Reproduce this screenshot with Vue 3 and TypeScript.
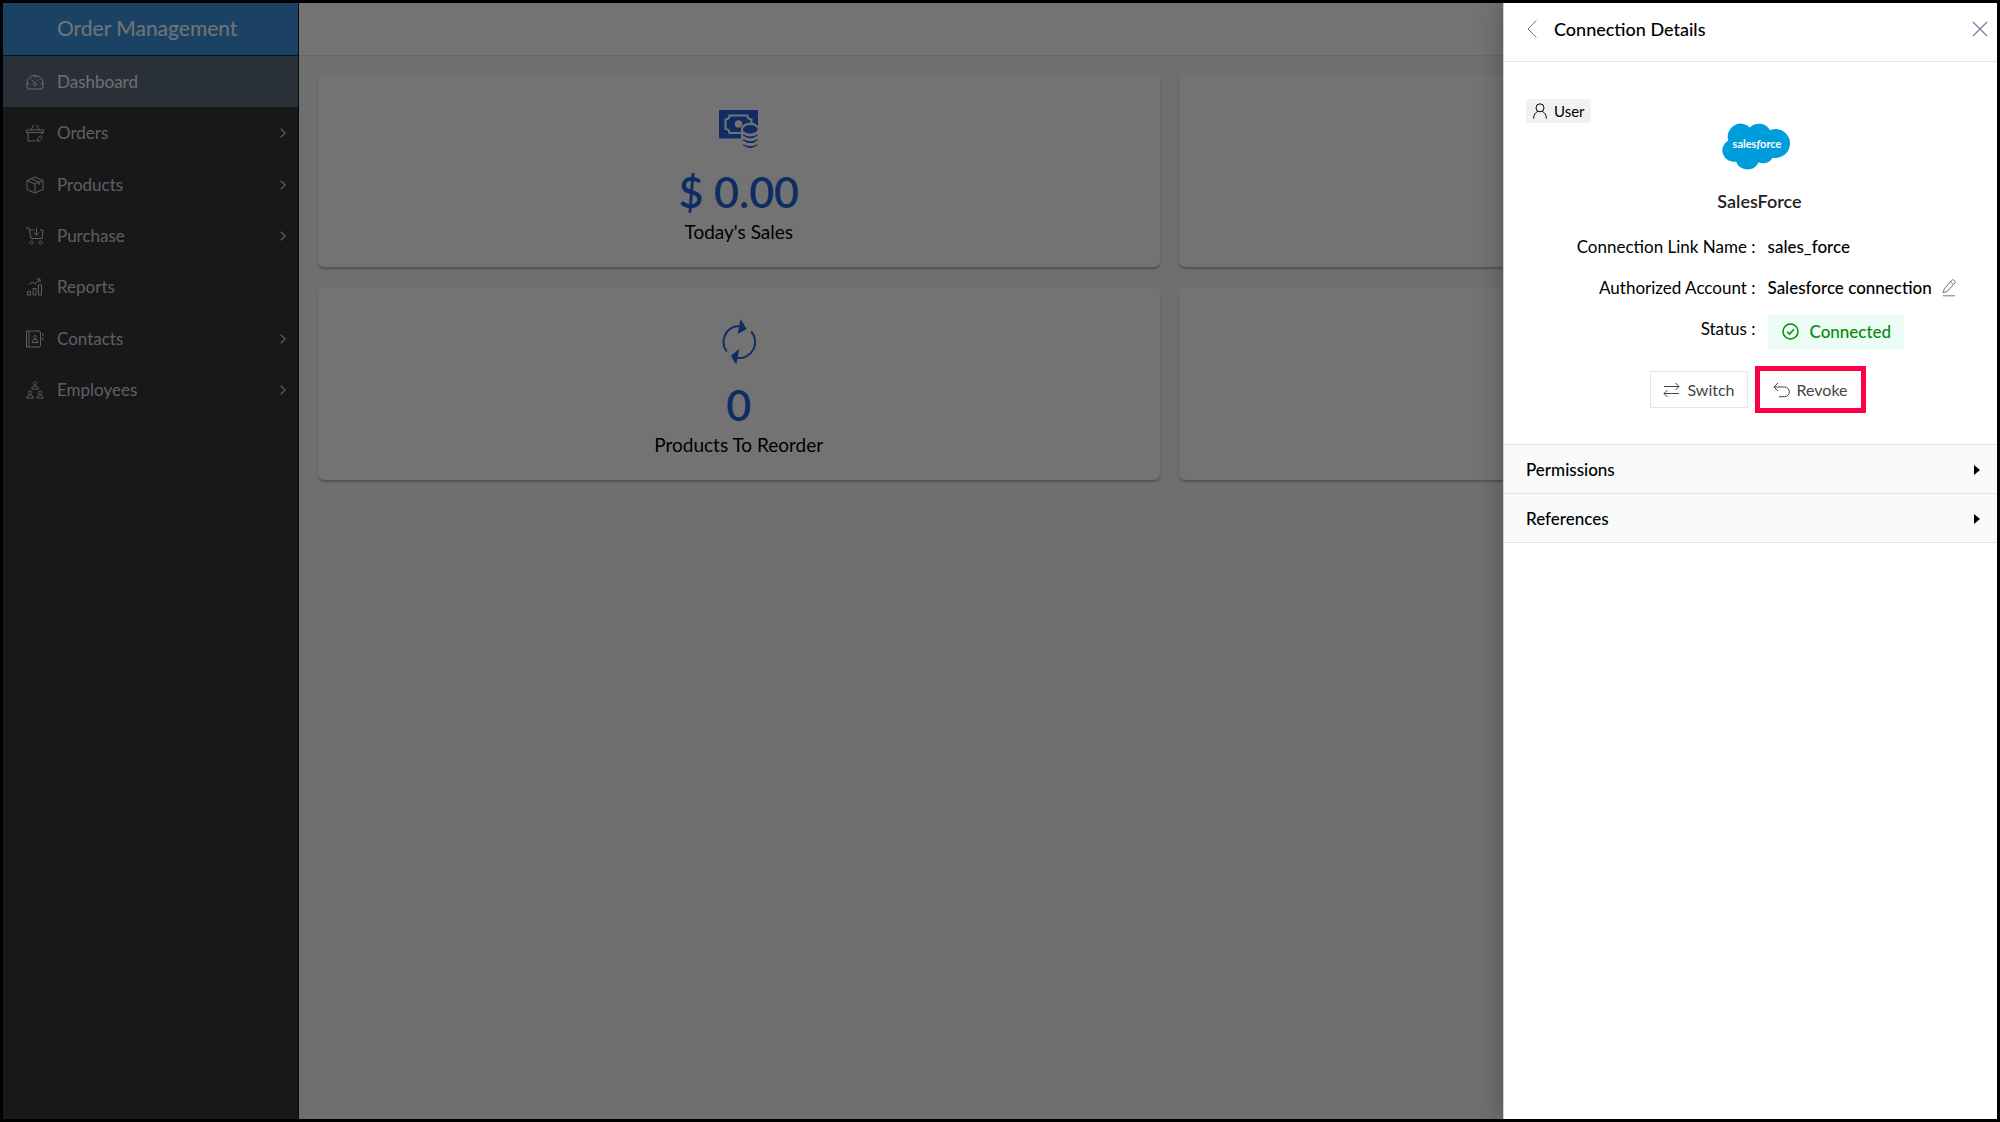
<script setup lang="ts">
interface NavItem {
  label: string
  icon: string[]
  expandable: boolean
  active?: boolean
}

const navItems: NavItem[] = [
  {
    label: 'Dashboard',
    expandable: false,
    active: true,
    icon: [
      'M3 16h12a2 2 0 0 0 2-2.200V10A8 7.500 0 0 0 1 10v3.800A2 2 0 0 0 3 16Z',
      'M5.500 6.500l2.700 3.300M9 2.500v2M12.800 6.600l-1.400 1.200M1 10.500h2M15 10.500h2',
      'M9 9.700a1.500 1.500 0 1 0 .1 0Z',
    ],
  },
  {
    label: 'Orders',
    expandable: true,
    icon: ['M.5 6h17v2.500H.5Z', 'M2 8.500V17h7M16 8.500v2', 'M7.500 1L5 6M10.500 1L13 6', 'M11.500 14.700l3-3 2 2-3 3-2.500.5Z'],
  },
  {
    label: 'Products',
    expandable: true,
    icon: ['M9 1l8 3.500v9L9 17l-8-3.500v-9Z', 'M1 4.500L9 8l8-3.500M9 8v9', 'M5 2.700l8 3.500v3'],
  },
  {
    label: 'Purchase',
    expandable: true,
    icon: [
      'M0 1h3l2 10.500h11L17 3h-3M4 3h4',
      'M10.500 1v7M7.700 5.500l2.800 2.800 2.800-2.800',
      'M5.500 14a1.600 1.600 0 1 0 .1 0ZM14.500 14a1.600 1.600 0 1 0 .1 0Z',
    ],
  },
  {
    label: 'Reports',
    expandable: false,
    icon: ['M1.500 13.500h3V17h-3ZM7 10.500h3V17H7ZM12.500 7h3v10h-3Z', 'M3 6.500L6.500 4 9 6l5-5M10.500 1H14v3.500'],
  },
  {
    label: 'Contacts',
    expandable: true,
    icon: [
      'M.5 1h12.500a1.500 1.500 0 0 1 1.500 1.500v13A1.500 1.500 0 0 1 13 17H.5ZM3 1v16',
      'M9 5.500a1.500 1.500 0 1 0 .1 0ZM6 12.500c0-2 1.200-3 3-3s3 1 3 3Z',
      'M16.800 3v3M16.800 7.500v3',
    ],
  },
  {
    label: 'Employees',
    expandable: true,
    icon: [
      'M9 .8a1.700 1.700 0 1 0 .1 0ZM5.800 8c0-2 1.200-3 3.200-3s3.200 1 3.200 3Z',
      'M4 9.800a1.700 1.700 0 1 0 .1 0ZM.8 17c0-2 1.200-3 3.200-3s3.200 1 3.200 3Z',
      'M14 9.800a1.700 1.700 0 1 0 .1 0ZM10.800 17c0-2 1.200-3 3.200-3s3.200 1 3.200 3Z',
    ],
  },
]

const sections: string[] = ['Permissions', 'References']
</script>

<template>
  <div class="app">
    <aside class="sidebar">
      <h1 class="brand">Order Management</h1>
      <nav>
        <ul class="nav">
          <li v-for="item in navItems" :key="item.label">
            <a href="#" class="nav-link" :class="{ active: item.active }">
              <svg class="nav-icon" viewBox="0 0 18 18" aria-hidden="true">
                <path v-for="d in item.icon" :key="d" :d="d" />
              </svg>
              <span class="nav-label">{{ item.label }}</span>
              <svg v-if="item.expandable" class="chevron" viewBox="0 0 6 10" aria-hidden="true">
                <path d="M.7.7L5.200 5 .7 9.300" />
              </svg>
            </a>
          </li>
        </ul>
      </nav>
    </aside>

    <main class="main">
      <header class="topbar"></header>
      <div class="cards">
        <section class="card">
          <div class="card-icon">
            <svg width="39" height="39" viewBox="0 0 39 39" aria-hidden="true">
              <path class="solid" d="M1 0h37q1 0 1 1v27.500H0V1Q0 0 1 0Z" />
              <path
                class="cut-line"
                d="M10.500 5.500h18q0 3.500 4 4v9.500q-4 .5-4 4h-18q0-3.500-4-4V9.500q4-.5 4-4Z"
              />
              <circle class="cut" cx="19.500" cy="14" r="3.700" />
              <path class="cut" d="M22 19a9 6 0 0 1 17-3v23H24v-10h-2Z" />
              <ellipse class="solid" cx="31.200" cy="19.300" rx="7.300" ry="4.300" />
              <path class="solid" d="M24 24.200q7.200 4.400 14.500 0v1.400q-7.200 5.400-14.500 0ZM24 29q7.200 4.400 14.500 0v1.400q-7.200 5.400-14.500 0ZM24 34q7.200 4.400 14.500 0v1q-7.200 6.500-14.500 0Z" />
            </svg>
          </div>
          <p class="value">$ 0.00</p>
          <h2 class="caption">Today's Sales</h2>
        </section>
        <section class="card"></section>
        <section class="card">
          <div class="card-icon">
            <svg width="34" height="46" viewBox="0 0 34 46" aria-hidden="true">
              <path class="ring" d="M4.700 32.500A16 16 0 0 1 17 7M29.200 12.500A16 16 0 0 1 15 38.900" />
              <path class="solid" d="M18.500 0l6.200 10-9 5ZM17.300 30l-8.500 6.700 5.500 8.800Z" />
            </svg>
          </div>
          <p class="value">0</p>
          <h2 class="caption">Products To Reorder</h2>
        </section>
        <section class="card"></section>
      </div>
    </main>

    <div class="overlay"></div>

    <aside class="panel" aria-label="Connection Details">
      <header class="panel-head">
        <button type="button" class="icon-btn" aria-label="Back">
          <svg width="10" height="18" viewBox="0 0 10 18"><path d="M9.300.5L1 9l8.300 8.500" /></svg>
        </button>
        <h2>Connection Details</h2>
        <button type="button" class="icon-btn close" aria-label="Close">
          <svg width="16" height="16" viewBox="0 0 16 16"><path d="M1 1l14 14M15 1L1 15" /></svg>
        </button>
      </header>

      <div class="details">
        <span class="badge">
          <svg width="14" height="16" viewBox="0 0 14 16" aria-hidden="true">
            <circle cx="7" cy="4.800" r="4" />
            <path d="M.6 15.500c0-4 2-6 4.200-7.200M13.400 15.500c0-4-2-6-4.200-7.200" />
          </svg>
          User
        </span>

        <svg class="logo" width="68" height="48" viewBox="0 0 68 48" role="img" aria-label="salesforce">
          <path
            d="M28 4.500A12.500 12.500 0 0 1 48 7.200 15 15 0 0 1 53.500 6a14.500 14.500 0 0 1 0 29 14 14 0 0 1-2.800-.3 10.800 10.800 0 0 1-14 4.600A12.300 12.300 0 0 1 14 38.500 11.300 11.300 0 0 1 6.300 17.500 13 13 0 0 1 28 4.500Z"
          />
          <text x="35" y="25" text-anchor="middle">sales<tspan font-style="italic">f</tspan>orce</text>
        </svg>

        <h3 class="name">SalesForce</h3>

        <dl class="fields">
          <dt>Connection Link Name :</dt>
          <dd>sales_force</dd>
          <dt>Authorized Account :</dt>
          <dd>
            Salesforce connection
            <button type="button" class="icon-btn edit" aria-label="Edit account">
              <svg width="14" height="18" viewBox="0 0 14 18">
                <path d="M2.500 9.500L9.800 1.200q1-1 2 0l1 .9q.9 1 0 2L5.500 12.300 1 13.800ZM8.500 2.700l3 2.800M1 16.800h12" />
              </svg>
            </button>
          </dd>
          <dt>Status :</dt>
          <dd>
            <span class="status">
              <svg width="17" height="17" viewBox="0 0 17 17" aria-hidden="true">
                <circle cx="8.500" cy="8.500" r="7.500" />
                <path d="M5 8.700l2.500 2.400L12 6.300" />
              </svg>
              Connected
            </span>
          </dd>
        </dl>

        <div class="actions">
          <button type="button" class="action">
            <svg width="17" height="16" viewBox="0 0 17 16" aria-hidden="true">
              <path d="M1 4.500h15M12.500 1L16 4.500 12.500 8M16 11.500H1M4.500 8L1 11.500 4.500 15" />
            </svg>
            Switch
          </button>
          <button type="button" class="action highlighted">
            <svg width="17" height="16" viewBox="0 0 17 16" aria-hidden="true">
              <path d="M1 5h10.500a4.800 4.800 0 0 1 0 9.700H6M5 1L1 5l4 4" />
            </svg>
            Revoke
          </button>
        </div>
      </div>

      <button v-for="section in sections" :key="section" type="button" class="section">
        {{ section }}
        <svg width="6" height="10" viewBox="0 0 6 10" aria-hidden="true"><path d="M0 0l6 5-6 5Z" /></svg>
      </button>
    </aside>
  </div>
</template>

<style>
body {
  margin: 0;
}
</style>

<style scoped>
* {
  box-sizing: border-box;
}

.app {
  position: relative;
  display: flex;
  min-height: 100vh;
  overflow: hidden;
  border: 3px solid #000;
  background: #f2f5f9;
  font-family: Lato, "Open Sans", sans-serif;
  font-size: 17px;
  line-height: 24px;
  color: #000;
}

h1,
h2,
h3,
p,
ul,
dl,
dd {
  margin: 0;
  padding: 0;
}

button {
  font: inherit;
  color: inherit;
  cursor: pointer;
}

svg {
  flex: none;
  fill: none;
  stroke: currentColor;
}

/* Sidebar */
.sidebar {
  flex: none;
  width: 296px;
  border-right: 1px solid #14161a;
  background: #31353b;
}

.brand {
  height: 53px;
  padding-left: 54px;
  border-bottom: 1px solid #1c2f42;
  background: #3c93e0;
  color: #fff;
  font-size: 21px;
  font-weight: 400;
  line-height: 49px;
}

.nav {
  display: grid;
  grid-auto-rows: 1fr;
  min-height: 360px;
  list-style: none;
}

.nav-link {
  display: flex;
  align-items: center;
  height: 100%;
  padding: 0 12px 0 23px;
  color: #d2d2d2;
  text-decoration: none;
}

.nav-link.active {
  background: #5d6b7c;
  color: #f4f4f4;
}

.nav-icon {
  width: 18px;
  height: 18px;
}

.nav-label {
  flex: 1;
  padding-left: 13px;
}

.chevron {
  width: 6px;
  height: 10px;
  stroke-width: 1.2;
}

/* Dashboard */
.main {
  flex: 1;
  min-width: 0;
}

.topbar {
  height: 53px;
  border-bottom: 1px solid #e4e7ea;
  background: #fff;
}

.cards {
  display: grid;
  grid-template-columns: repeat(2, calc(50% + 2px));
  gap: 20px 19px;
  padding: 18px 0 0 19px;
}

.card {
  display: flex;
  flex-direction: column;
  align-items: center;
  height: 193px;
  padding-top: 32px;
  border-radius: 6px;
  background: #fff;
  box-shadow: 0 2px 2px rgba(0, 0, 0, 0.25);
}

.card-icon {
  display: flex;
  align-items: center;
  height: 46px;
}

.solid {
  fill: #2365dc;
  stroke: none;
}

.cut {
  fill: #fff;
  stroke: none;
}

.cut-line {
  stroke: #fff;
  stroke-width: 2;
}

.ring {
  stroke: #2365dc;
  stroke-width: 2;
}

.value {
  margin-top: 15px;
  color: #2365dc;
  font-size: 43px;
  font-weight: 600;
  line-height: 50px;
}

.caption {
  margin-top: 3px;
  font-size: 19px;
  font-weight: 400;
}

.overlay {
  position: absolute;
  inset: 0;
  background: rgba(0, 0, 0, 0.55);
}

/* Connection panel */
.panel {
  position: absolute;
  top: 0;
  right: 0;
  bottom: 0;
  width: 494px;
  border-left: 1px solid #d0d0d0;
  background: #fff;
  box-shadow: 0 0 24px rgba(0, 0, 0, 0.3);
}

.panel-head {
  display: flex;
  align-items: center;
  height: 59px;
  padding: 0 9px 6px 23px;
  border-bottom: 1px solid #e2e4e6;
}

.panel-head h2 {
  flex: 1;
  padding-left: 17px;
  font-size: 18px;
  font-weight: 500;
}

.icon-btn {
  display: flex;
  padding: 0;
  border: 0;
  background: none;
  color: #6b7280;
}

.close {
  color: #74829c;
}

.close svg {
  stroke-width: 1.3;
}

.details {
  display: flex;
  flex-direction: column;
  align-items: center;
  height: 382px;
  padding: 37px 0 0 22px;
}

.badge {
  display: flex;
  align-items: center;
  align-self: flex-start;
  gap: 7px;
  height: 24px;
  padding: 0 6px 0 7px;
  border-radius: 3px;
  background: #f1f1f3;
  font-size: 15px;
}

.logo {
  margin-right: 12px;
}

.logo path {
  fill: #009ddc;
  stroke: none;
}

.logo text {
  fill: #fff;
  stroke: none;
  font-size: 11px;
  font-weight: 700;
}

.name {
  margin: 18px 4px 0 0;
  color: #222;
  font-size: 18px;
  font-weight: 600;
}

.fields {
  display: grid;
  grid-template-columns: 1fr 1fr;
  gap: 17px 12px;
  align-self: stretch;
  margin-top: 22px;
}

.fields dt {
  text-align: right;
}

.fields dd {
  display: flex;
  align-items: center;
  height: 24px;
  font-weight: 500;
  white-space: nowrap;
}

.edit {
  margin-left: 10px;
}

.status {
  display: flex;
  align-items: center;
  gap: 11px;
  height: 34px;
  margin-top: 5px;
  padding: 0 13px 0 14px;
  background: #ebfdf4;
  color: #0a8a0a;
}

.status svg {
  stroke-width: 1.5;
}

.actions {
  display: flex;
  gap: 12px;
  margin: 30px 12px 0 0;
}

.action {
  display: flex;
  align-items: center;
  gap: 7px;
  height: 37px;
  padding: 0 12px;
  border: 1px solid #e2e6ec;
  background: #fff;
  color: #444;
  font-size: 16px;
}

.highlighted {
  border-color: #fff;
  outline: 5px solid #ff0046;
}

.section {
  display: flex;
  align-items: center;
  justify-content: space-between;
  width: 100%;
  height: 49px;
  padding: 1px 17px 0 22px;
  border: 0;
  border-top: 1px solid #e2e5e6;
  background: #f9fbfa;
  font-weight: 500;
}

.section:last-child {
  height: 50px;
  border-bottom: 1px solid #e2e5e6;
}

.section path {
  fill: #000;
  stroke: none;
}
</style>
